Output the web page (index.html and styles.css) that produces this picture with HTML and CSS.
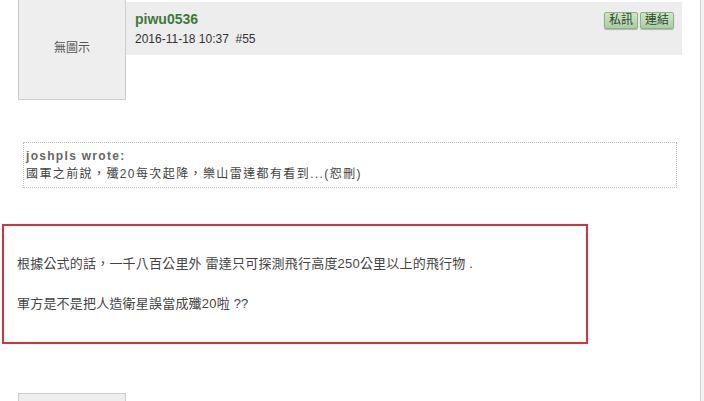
FILE: index.html
```html
<!DOCTYPE html>
<html lang="zh-Hant">
  <head>
    <meta charset="UTF-8" />
    <meta name="viewport" content="width=device-width, initial-scale=1.0" />
    <title>討論串</title>
    <link rel="stylesheet" href="styles.css">
  </head>
  <body>
    <div class="page">
      <!-- post #55 -->
      <div class="post">
        <div class="post-head">
          <div class="avatar">無圖示</div>
          <div class="author-bar">
            <div class="author">
              <div class="name">piwu0536</div>
              <div class="date">2016-11-18 10:37&nbsp; #55</div>
            </div>
            <div class="actions">
              <span class="btn">私訊</span>
              <span class="btn">連結</span>
            </div>
          </div>
        </div>

        <div class="quote">
          <div class="quote-by">joshpls wrote:</div>
          <div class="quote-text">國軍之前說，殲20每次起降，樂山雷達都有看到...(恕刪)</div>
        </div>

        <div class="post-body">
          根據公式的話，一千八百公里外 雷達只可探測飛行高度250公里以上的飛行物 .<br /><br />
          軍方是不是把人造衛星誤當成殲20啦 ??
        </div>
      </div>

      <!-- next post, only its avatar edge is in view -->
      <div class="post">
        <div class="post-head">
          <div class="avatar"></div>
        </div>
      </div>
    </div>
  </body>
</html>
```

FILE: styles.css
```css
body {
  margin: 0;
  background: #f2f2f2;
  font-family: "Liberation Sans", Arial, "Noto Sans CJK TC", sans-serif;
  color: #333;
  overflow: hidden;
}
.page {
  width: 700px;
  height: 401px;
  background: #fff;
  border-right: 1px solid #cfcfcf;
  overflow: hidden;
}
.post {
  margin-top: -8px;
}
.post + .post {
  margin-top: 49px;
}
.post-head {
  display: flex;
  align-items: flex-start;
  padding-left: 18px;
}
.avatar {
  width: 106px;
  height: 106px;
  border: 1px solid #ccc;
  background: #eee;
  display: flex;
  align-items: center;
  justify-content: center;
  font-size: 12px;
  color: #555;
}
.author-bar {
  margin-top: 10px;
  width: 556px;
  height: 53px;
  background: #ededed;
  display: flex;
  justify-content: space-between;
  align-items: flex-start;
  box-sizing: border-box;
  padding: 8px 8px 0 9px;
}
.name {
  font-size: 14px;
  font-weight: bold;
  color: #3c7a3c;
  line-height: 18px;
}
.date {
  font-size: 12px;
  color: #333;
  line-height: 18px;
  margin-top: 2px;
}
.actions {
  display: flex;
  gap: 2px;
  margin-top: 2px;
}
.btn {
  display: block;
  width: 32px;
  height: 15px;
  line-height: 15px;
  text-align: center;
  font-size: 12px;
  color: #2a4a2a;
  border: 1px solid #8fae8a;
  border-radius: 2px;
  background: linear-gradient(#cfe6c8, #a9cda2);
  box-shadow: 0 1px 1px rgba(0, 0, 0, 0.25);
}
.quote {
  margin: 42px 0 0 23px;
  width: 654px;
  box-sizing: border-box;
  border: 1px dotted #bbb;
  padding: 4px 2px 4px;
}
.quote-by {
  font-size: 12px;
  font-weight: bold;
  color: #666;
  letter-spacing: 1.3px;
  line-height: 18px;
}
.quote-text {
  font-size: 12px;
  color: #444;
  letter-spacing: 1.4px;
  line-height: 18px;
}
.post-body {
  margin: 36px 0 0 2px;
  width: 586px;
  height: 120px;
  box-sizing: border-box;
  border: 2px solid #d0343c;
  padding: 28px 13px;
  font-size: 13px;
  line-height: 20px;
  letter-spacing: 0.2px;
  color: #444;
}
```
